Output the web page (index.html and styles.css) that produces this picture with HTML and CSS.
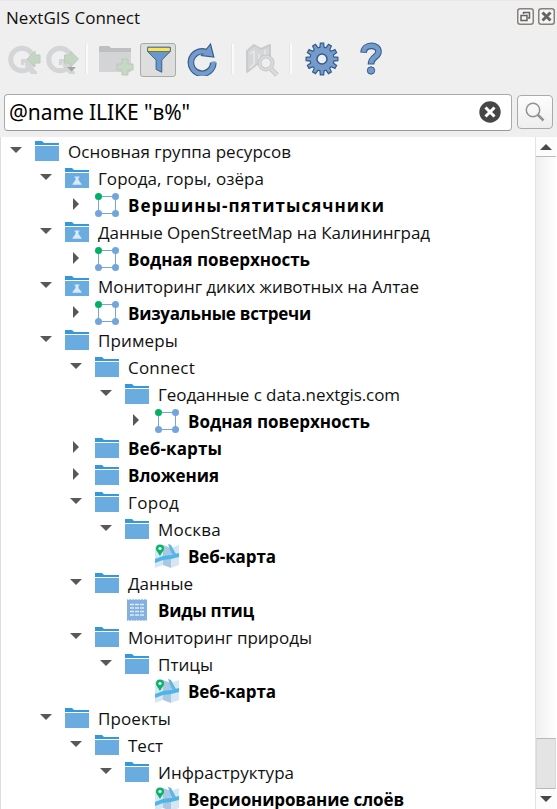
FILE: index.html
```html
<!DOCTYPE html>
<html lang="ru">
<head>
<meta charset="utf-8">
<title>NextGIS Connect</title>
<link rel="stylesheet" href="styles.css">
</head>
<body>
<svg class="defs" aria-hidden="true">
  <symbol id="folder" viewBox="0 0 24 24"><path d="M0 2h7l2 2h15v2H0z" fill="#3498db"/><path d="M0 7h24v15H0z" fill="#6aace0"/></symbol>
  <symbol id="demo" viewBox="0 0 24 24"><path d="M0 2h7l2 2h15v2H0z" fill="#3498db"/><path d="M0 7h24v15H0z" fill="#6aace0"/><path d="M9.500 10.500h5v1h-1v2.500l3 4v.8H7.500V18l3-4v-2.500h-1z" fill="#d9e9f7"/></symbol>
  <symbol id="vector" viewBox="0 0 24 24"><path d="M3.500 3.500h17v17h-17z" fill="none" stroke="#75a7dc"/><g fill="#72a5d9"><circle cx="20.500" cy="3.500" r="3.500"/><circle cx="3.500" cy="20.500" r="3.500"/><circle cx="20.500" cy="20.500" r="3.500"/></g><circle cx="3.500" cy="3.500" r="3.500" fill="#00b064"/></symbol>
  <symbol id="map" viewBox="0 0 24 24"><path d="M0 3l8-2v20l-8 3z" fill="#d7e6f3"/><path d="M8 1l8 3v20l-8-3z" fill="#aac7e3"/><path d="M16 4l8-3v20l-8 3z" fill="#d7e6f3"/><path d="M13 0l3 1 5 9-4 1z" fill="#63b5e2"/><path d="M0 15l8-3 8-1 8-2v4l-8 2-8 1-8 3z" fill="#4eb5e6"/><path d="M5 12C3 8 1 7 1 4.500a4 4 0 018 0C9 7 7 8 5 12z" fill="#08b36a"/><circle cx="5" cy="4.500" r="1.600" fill="#fff"/></symbol>
  <symbol id="table" viewBox="0 0 24 24"><path d="M2 1l1.500 1L5 1l1.500 1L8 1l1.500 1L11 1l1.500 1L14 1l1.500 1L17 1l1.500 1L20 1l1.500 1 .5-1v22l-1.500-1-1.500 1-1.500-1-1.500 1-1.500-1-1.500 1-1.500-1-1.500 1-1.500-1L8 23l-1.500-1L5 23l-1.500-1L2 23z" fill="#83b0df"/><path d="M5 6.500h4m1 0h4m1 0h4M5 10h4m1 0h4m1 0h4M5 13.500h4m1 0h4m1 0h4M5 17h4m1 0h4m1 0h4" stroke="#dfebf8" stroke-width="1.300"/></symbol>
  <symbol id="q" viewBox="0 0 34 30"><circle cx="14" cy="14.500" r="11.300" fill="none" stroke="#d3d5d7" stroke-width="5"/><path d="M13 14h6l3 3v2l7 8v2h-6l-6-8v-3h-1v2h-3z" fill="#d3d5d7"/></symbol>
</svg>

<header class="titlebar">
  <h1 id="title">NextGIS Connect</h1>
  <svg class="window-btn" viewBox="0 0 17 17"><rect x=".75" y=".75" width="15.500" height="15.500" rx="2.500" fill="#f5f5f4" stroke="#85827f" stroke-width="1.500"/><path d="M6.500 6V4.500h6V10H11M4 7.500h6v5H4z" fill="none" stroke="#66625f" stroke-width="1.500"/></svg>
  <svg class="window-btn" viewBox="0 0 17 17"><rect x=".75" y=".75" width="15.500" height="15.500" rx="2.500" fill="#f5f5f4" stroke="#85827f" stroke-width="1.500"/><path d="M4.500 4.500l8 8m0-8l-8 8" stroke="#66625f" stroke-width="3"/></svg>
</header>

<div class="toolbar">
  <svg class="tool-q" viewBox="0 0 34 30"><use href="#q"/><path d="M19 14l8-8v4h5v8h-5v4z" fill="#c5d5c3" stroke="#bccbbb"/></svg>
  <svg class="tool-q" viewBox="0 0 34 30"><use href="#q"/><path d="M32.500 14l-8-8v4h-6v8h6v4z" fill="#c5d5c3" stroke="#bccbbb"/><path d="M21 22h9l-4.500 4.500z" fill="#a3a3a3"/></svg>
  <span class="separator"></span>
  <svg class="tool-add" viewBox="0 0 36 32"><path d="M0 6V1l1-1h9l2 2h20v4z" fill="#bebfc1"/><path d="M0 6h32v20H0z" fill="#d3d4d6"/><path d="M23 13h6v5h5v6h-5v5h-6v-5h-5v-6h5z" fill="#c8d8c6" stroke="#b9c9b8"/></svg>
  <button class="filter-btn"><svg viewBox="0 0 36 34"><path d="M7 3.500h24V8l-9 9v13l-6-3V17L7 8z" fill="#6b98cb" stroke="#355c86"/><path d="M7 3.500h24V8H7z" fill="#ffe34d" stroke="#4d7290"/></svg></button>
  <svg class="tool-refresh" viewBox="0 0 32 34"><path d="M19.500 9.800A11.200 11.200 0 1 0 27.300 20.500" fill="none" stroke="#355d8b" stroke-width="6.600"/><path d="M15.500 13.500L24.500 2l3.300 13z" fill="#759bcc" stroke="#355d8b" stroke-width="1.200"/><path d="M21.500 10.800A11.200 11.200 0 1 0 27.300 19.500" fill="none" stroke="#759bcc" stroke-width="4.400"/></svg>
  <span class="separator sep-second"></span>
  <svg class="tool-map" viewBox="0 0 36 36"><g stroke-linejoin="round"><path d="M3 9l7-6 7 4 9-4v20l-8-4-6 4-9 7z" fill="#d4d6d7" stroke="#c9cbcc" stroke-width="2"/><path d="M6 12l4-3v13l-4 4m9-14v9m6-13v12" fill="none" stroke="#e9e9e9" stroke-width="1.500"/><circle cx="22" cy="21" r="6.500" fill="#efefef" stroke="#c7c8ca" stroke-width="4"/><path d="M27 27l6 6" stroke="#c7c8ca" stroke-width="5"/><circle cx="22" cy="21" r="6.500" fill="none" stroke="#dadbdc" stroke-width="2"/><path d="M27 27l6 6" stroke="#dadbdc" stroke-width="3"/></g></svg>
  <span class="separator sep-third"></span>
  <svg class="tool-gear" id="gear" viewBox="-17 -17 34 34"></svg>
  <svg class="tool-help" viewBox="0 0 24 34"><path d="M4.500 10.800C5 1.500 19.500 2 19.500 9.500c0 6-7.500 5-7.500 13" fill="none" stroke="#355d8b" stroke-width="6.600"/><path d="M4.700 9.800C5.200 1.500 19.500 2 19.500 9.500c0 6-7.500 5-7.500 12" fill="none" stroke="#759bcc" stroke-width="4.500"/><circle cx="12" cy="28.500" r="3.700" fill="#759bcc" stroke="#355d8b"/></svg>
</div>

<div class="search">
  <div class="field"><span id="query">@name ILIKE "в%"</span>
    <svg viewBox="0 0 22 22"><circle cx="11" cy="11" r="10.700" fill="#464646"/><path d="M6.500 6.500l9 9m0-9l-9 9" stroke="#fff" stroke-width="3"/></svg>
  </div>
  <button class="search-btn"><svg viewBox="0 0 20 20"><circle cx="8" cy="8" r="6.700" fill="none" stroke="#929292" stroke-width="1.500"/><path d="M12.500 12.500l6 6" stroke="#929292" stroke-width="2.500"/></svg></button>
</div>

<main class="browser">
  <div class="tree" id="tree"></div>
  <div class="scrollbar">
    <div class="scroll-end"><svg viewBox="0 0 12 6"><path d="M6 0l6 6H0z"/></svg></div>
    <div class="track"></div>
    <div class="thumb"></div>
    <div class="scroll-end bottom"><svg viewBox="0 0 12 6"><path d="M0 0h12L6 6z"/></svg></div>
  </div>
</main>
<script src="tree.js"></script>
</body>
</html>
```
FILE: styles.css
```css
* { box-sizing: border-box; }
body { margin: 0; width: 557px; height: 809px; overflow: hidden; display: flex; flex-direction: column; background: #efefef; color: #111; font-family: "Open Sans", "Noto Sans", sans-serif; border-top: 1px solid #e8e8e8; }
svg { display: block; flex: none; }
button { padding: 0; margin: 0; }
.defs { width: 0; height: 0; flex: none; display: none; }
.titlebar { height: 34px; padding: 0 2px 0 6px; display: flex; align-items: center; gap: 4px; flex: none; }
.titlebar h1 { margin: 0 auto 0 0; font-size: 17px; font-weight: 400; line-height: 32px; letter-spacing: 0.03px; }
.window-btn { width: 17px; height: 17px; margin-top: -3px; }
.toolbar { height: 58px; padding: 7px 0 0 8px; display: flex; align-items: flex-start; flex: none; }
.tool-q { width: 34px; height: 30px; margin: 3px 4px 0 0; }
.separator { width: 3px; height: 30px; margin: 2px 12px 0 1px; background: #fafafa; border-left: 1px solid #e5e5e5; }
.tool-add { width: 36px; height: 32px; margin: 4px 5px 0 -1px; }
.filter-btn { width: 36px; height: 34px; margin-top: 1px; border: 1px solid #aaa; border-radius: 3px; background: #dedede; }
.filter-btn svg { width: 34px; height: 32px; }
.tool-refresh { width: 32px; height: 34px; margin: 0 12px 0 10px; }
.sep-second { margin-right: 10px; }
.tool-map { width: 36px; height: 36px; }
.sep-third { margin: 2px 13px 0 9px; }
.tool-gear { width: 34px; height: 34px; }
.tool-help { width: 24px; height: 34px; margin-left: 20px; }
.search { height: 44px; padding: 1px 4px 0; display: flex; gap: 5px; flex: none; align-items: flex-start; }
.field { width: 508px; height: 37px; border: 1px solid #aaa; border-bottom-color: #999; border-radius: 4px; background: #fff; display: flex; align-items: center; justify-content: space-between; padding: 0 10px 0 4px; font: 21px/33px "Noto Sans", sans-serif; color: #000; }
.field svg { width: 22px; height: 22px; margin-bottom: 1px; }
.search-btn { width: 36px; height: 34px; margin-top: 1px; border: 1px solid #aaa; border-radius: 4px; background: linear-gradient(#fdfdfd, #eee); display: grid; place-items: center; }
.search-btn svg { width: 20px; height: 20px; }
.browser { flex: 1; min-height: 0; display: flex; background: #fff; border-left: 1px solid #ddd; }
.tree { flex: 1; padding-top: 1px; overflow: hidden; }
.row { height: 27px; display: flex; align-items: center; white-space: nowrap; font-size: 17px; line-height: 27px; }
.arrow { width: 12px; height: 12px; margin: 0 13px 3px 9px; fill: #585858; }
.icon { width: 24px; height: 24px; margin: 0 9px 2px 0; }
.row.strong { font-weight: 700; color: #000; }
.scrollbar { width: 22px; display: flex; flex-direction: column; background: linear-gradient(90deg, #f2f2f2, #fff); border-left: 1px solid #e4e4e4; }
.scroll-end { height: 20px; border-bottom: 1px solid #bbb; background: #fcfcfc; display: grid; place-items: center; margin-right: 1px; flex: none; }
.scroll-end svg { width: 12px; height: 6px; fill: #484848; margin-right: 1px; }
.track { flex: 1; background: linear-gradient(90deg, #f0f0f0, #fff); }
.thumb { height: 51px; background: #e4e4e4; border: 1px solid #b9b9b9; border-left-color: #d9d9d9; border-right-color: #d9d9d9; margin-right: 1px; flex: none; }
.bottom { border: 0; }
```
FILE: tree.js
```js
// depth, icon, expander, label, bold, label width in pixels
const rows = [
  [0, "folder", "open", "Основная группа ресурсов", 0, 223],
  [1, "demo", "open", "Города, горы, озёра", 0, 166],
  [2, "vector", "closed", "Вершины-пятитысячники", 1, 257],
  [1, "demo", "open", "Данные OpenStreetMap на Калининград", 0, 332],
  [2, "vector", "closed", "Водная поверхность", 1, 182],
  [1, "demo", "open", "Мониторинг диких животных на Алтае", 0, 321],
  [2, "vector", "closed", "Визуальные встречи", 1, 183],
  [1, "folder", "open", "Примеры", 0, 80],
  [2, "folder", "open", "Connect", 0, 67],
  [3, "folder", "open", "Геоданные с data.nextgis.com", 0, 242],
  [4, "vector", "closed", "Водная поверхность", 1, 182],
  [2, "folder", "closed", "Веб-карты", 1, 94],
  [2, "folder", "closed", "Вложения", 1, 91],
  [2, "folder", "open", "Город", 0, 51],
  [3, "folder", "open", "Москва", 0, 63],
  [4, "map", "", "Веб-карта", 1, 88],
  [2, "folder", "open", "Данные", 0, 65],
  [3, "table", "", "Виды птиц", 1, 96],
  [2, "folder", "open", "Мониторинг природы", 0, 184],
  [3, "folder", "open", "Птицы", 0, 55],
  [4, "map", "", "Веб-карта", 1, 88],
  [1, "folder", "open", "Проекты", 0, 73],
  [2, "folder", "open", "Тест", 0, 35],
  [3, "folder", "open", "Инфраструктура", 0, 136],
  [4, "map", "", "Версионирование слоёв", 1, 216]
];
const arrows = { open: "M0 3h12L6 9z", closed: "M3 0l6 6-6 6z", "": "" };

function fit(el, width) {
  const spare = width - el.getBoundingClientRect().width;
  el.style.letterSpacing = spare / el.textContent.length + "px";
}

const tree = document.getElementById("tree");
for (const [depth, icon, state, label, bold, width] of rows) {
  const row = document.createElement("div");
  row.className = bold ? "row strong" : "row";
  row.style.paddingLeft = depth * 30 + "px";
  row.innerHTML = `<svg class="arrow" viewBox="0 0 12 12"><path d="${arrows[state]}"/></svg><svg class="icon"><use href="#${icon}"/></svg><span>${label}</span>`;
  tree.append(row);
  fit(row.lastChild, width);
}
fit(document.getElementById("query"), 181);

// Twelve-tooth settings gear
let points = [];
for (let i = 0; i < 12; i++) {
  for (const [offset, r] of [[-10, 12], [-6, 16], [6, 16], [10, 12]]) {
    const a = (i * 30 + offset) * Math.PI / 180;
    points.push((r * Math.cos(a)).toFixed(2) + " " + (r * Math.sin(a)).toFixed(2));
  }
}
document.getElementById("gear").innerHTML = `<path d="M${points.join("L")}Z" fill="#759bcc" stroke="#355d8b" stroke-width="1.2"/><circle r="5" fill="#efefef" stroke="#355d8b" stroke-width="1.5"/>`;
```
